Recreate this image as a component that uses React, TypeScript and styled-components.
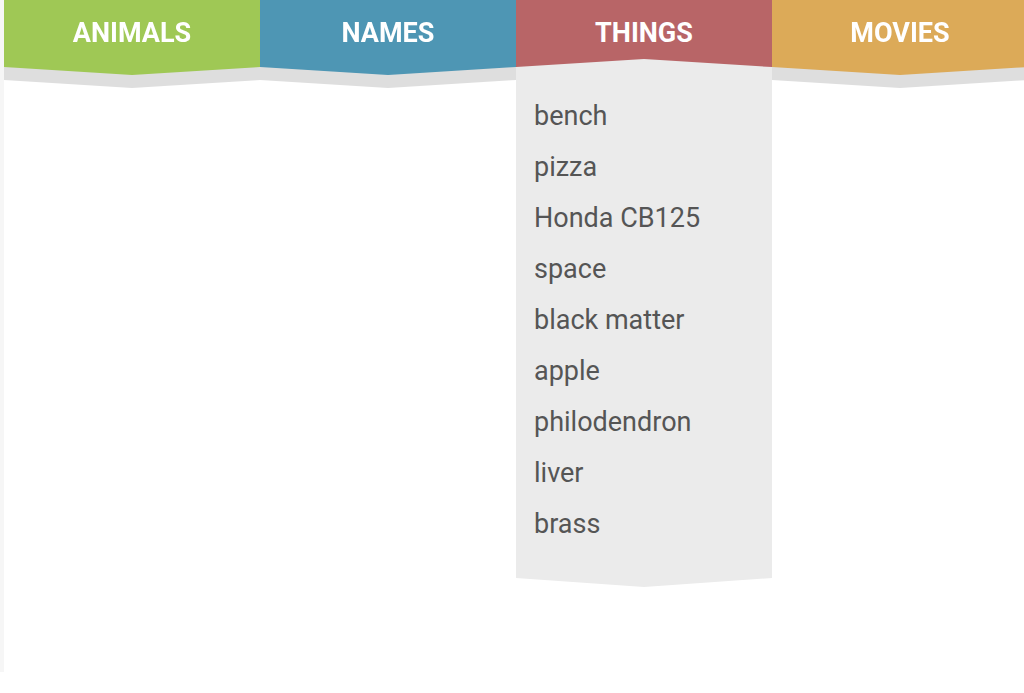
import styled, { createGlobalStyle } from "styled-components";

const GlobalStyle = createGlobalStyle`
  html, body {
    margin: 0;
    padding: 0;
    background: #ffffff;
    font-family: Roboto, "Noto Sans", sans-serif;
  }
`;

const Frame = styled.div`
  height: 672px;
  border-left: 4px solid #f6f6f6;
  overflow: hidden;
`;

const Nav = styled.nav`
  display: flex;
  align-items: flex-start;
`;

const Column = styled.div`
  flex: 0 0 256px;
  width: 256px;
`;

// wrapper carries the flat grey "shadow" of the chevron below the tab
const Shade = styled.div`
  filter: drop-shadow(0 13px 0 #dedede);
`;

const Tab = styled.div<{ $color: string; $active?: boolean }>`
  height: ${(p) => (p.$active ? "67px" : "75px")};
  padding-bottom: ${(p) => (p.$active ? "1px" : "9px")};
  box-sizing: border-box;
  display: flex;
  align-items: center;
  justify-content: center;
  background: ${(p) => p.$color};
  color: #fff;
  font-weight: 700;
  font-size: 27px;
  text-transform: uppercase;
  clip-path: ${(p) =>
    p.$active
      ? "polygon(0 0, 100% 0, 100% 67px, 50% 59px, 0 67px)"
      : "polygon(0 0, 100% 0, 100% 67px, 50% 75px, 0 67px)"};
`;

const Dropdown = styled.div`
  background: #ebebeb;
  padding-bottom: 9px;
  clip-path: polygon(0 0, 100% 0, 100% calc(100% - 9px), 50% 100%, 0 calc(100% - 9px));
`;

const List = styled.ul`
  list-style: none;
  margin: 0;
  padding: 24px 18px 28px;
`;

const Item = styled.li`
  font-size: 27px;
  line-height: 51px;
  color: #555555;
`;

const tabs = [
  { label: "Animals", color: "#9fc855" },
  { label: "Names", color: "#4e96b4" },
  { label: "Things", color: "#b86567", active: true },
  { label: "Movies", color: "#dcaa58" },
];

const things = [
  "bench",
  "pizza",
  "Honda CB125",
  "space",
  "black matter",
  "apple",
  "philodendron",
  "liver",
  "brass",
];

export default function App() {
  return (
    <>
      <GlobalStyle />
      <Frame>
        <Nav>
          {tabs.map((t) =>
            t.active ? (
              <Column key={t.label}>
                <Dropdown>
                  <Tab $color={t.color} $active>
                    {t.label}
                  </Tab>
                  <List>
                    {things.map((thing) => (
                      <Item key={thing}>{thing}</Item>
                    ))}
                  </List>
                </Dropdown>
              </Column>
            ) : (
              <Column key={t.label}>
                <Shade>
                  <Tab $color={t.color}>{t.label}</Tab>
                </Shade>
              </Column>
            )
          )}
        </Nav>
      </Frame>
    </>
  );
}
